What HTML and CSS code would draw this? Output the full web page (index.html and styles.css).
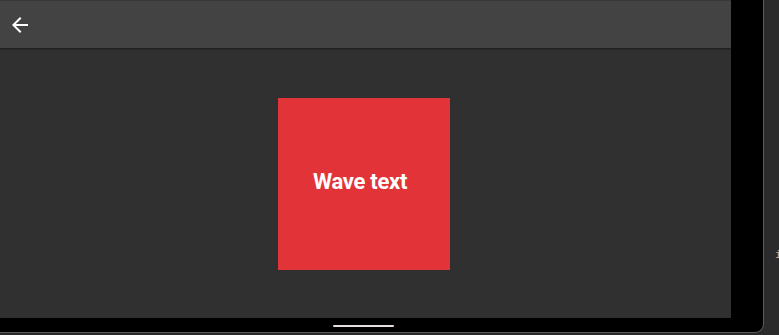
FILE: index.html
```html
<!DOCTYPE html>
<html lang="en">
<head>
    <meta charset="UTF-8">
    <meta name="viewport" content="width=device-width, initial-scale=1.0">
    <title>Wave text</title>
    <link rel="stylesheet" href="styles.css">
</head>
<body>
    <div class="device">
        <div class="screen">
            <div class="toolbar">
                <svg class="back" viewBox="0 0 24 24" width="24" height="24">
                    <path fill="#fff" d="M20 11H7.83l5.59-5.59L12 4l-8 8 8 8 1.41-1.41L7.83 13H20v-2z"/>
                </svg>
            </div>
            <div class="content">
                <div class="box">Wave text</div>
            </div>
        </div>
        <div class="nav">
            <div class="handle"></div>
        </div>
    </div>
    <span class="edge-mark">i</span>
</body>
</html>
```

FILE: styles.css
```css
body {
    margin: 0;
    background: #2b2b2b;
    font-family: Roboto, "Liberation Sans", sans-serif;
    width: 779px;
    height: 335px;
    overflow: hidden;
    position: relative;
}

.device {
    width: 763px;
    height: 332px;
    background: #000;
    border-right: 1px solid #5a5a5a;
    border-bottom: 1px solid #5a5a5a;
    border-bottom-right-radius: 9px;
    display: flex;
    flex-direction: column;
}

.screen {
    width: 731px;
    height: 318px;
    background: #303030;
    display: flex;
    flex-direction: column;
}

.toolbar {
    height: 48px;
    background: #434343;
    border-top: 1px solid #383838;
    box-sizing: border-box;
    display: flex;
    align-items: center;
    padding-left: 8px;
    box-shadow: 0 1px 2px rgba(0, 0, 0, 0.45);
    position: relative;
    z-index: 1;
}

.back {
    display: block;
}

.content {
    flex: 1;
    display: flex;
    justify-content: center;
    padding-top: 50px;
    padding-right: 3px;
}

.box {
    width: 172px;
    height: 172px;
    box-sizing: border-box;
    padding: 0 8px 6px 0;
    background: #e13338;
    color: #fff;
    font-weight: 700;
    font-size: 22px;
    letter-spacing: -0.3px;
    display: flex;
    align-items: center;
    justify-content: center;
}

.nav {
    width: 731px;
    flex: 1;
    display: flex;
    justify-content: center;
    align-items: flex-end;
    padding: 0 4px 5px 0;
    box-sizing: border-box;
}

.handle {
    width: 61px;
    height: 2px;
    border-radius: 1px;
    background: #e8dde0;
}

.edge-mark {
    position: absolute;
    left: 775px;
    top: 248px;
    font-size: 11px;
    color: #c9b3bb;
    font-family: "DejaVu Sans Mono", monospace;
}
```
